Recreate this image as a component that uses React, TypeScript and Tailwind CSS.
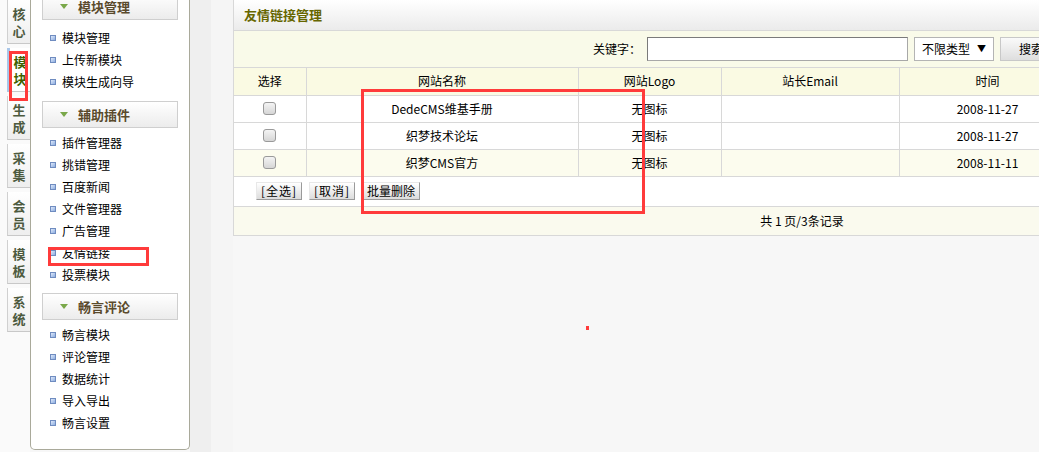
import React from 'react';

const FONT = { fontFamily: '"Noto Sans CJK SC", "Noto Sans", sans-serif' };

const TABS = [
  { label: ['核', '心'], active: false },
  { label: ['模', '块'], active: true },
  { label: ['生', '成'], active: false },
  { label: ['采', '集'], active: false },
  { label: ['会', '员'], active: false },
  { label: ['模', '板'], active: false },
  { label: ['系', '统'], active: false },
];

const MENU = [
  { title: '模块管理', items: ['模块管理', '上传新模块', '模块生成向导'] },
  { title: '辅助插件', items: ['插件管理器', '挑错管理', '百度新闻', '文件管理器', '广告管理', '友情链接', '投票模块'] },
  { title: '畅言评论', items: ['畅言模块', '评论管理', '数据统计', '导入导出', '畅言设置'] },
];

const ROWS = [
  { name: 'DedeCMS维基手册', logo: '无图标', email: '', time: '2008-11-27', bg: 'bg-white' },
  { name: '织梦技术论坛', logo: '无图标', email: '', time: '2008-11-27', bg: 'bg-white' },
  { name: '织梦CMS官方', logo: '无图标', email: '', time: '2008-11-11', bg: 'bg-[#fcfcee]' },
];

function Bullet() {
  return <span className="w-[6px] h-[6px] border border-[#6f8cc0] bg-gradient-to-br from-[#dfe9fa] to-[#8eaee0] shrink-0" />;
}

function SectionHeader({ title, first }: { title: string; first?: boolean }) {
  return (
    <div
      className={`h-[27px] mx-[11px] border border-[#cfcfcf] bg-gradient-to-b from-white to-[#ececec] flex items-center ${first ? '-mt-[7px]' : ''}`}
    >
      <svg width="8" height="5" viewBox="0 0 8 5" className="ml-[17px]">
        <path d="M0 0 L8 0 L4 5 Z" fill="#7aa84a" />
      </svg>
      <span className="ml-[10px] text-[13px] font-bold text-[#5a4a2c]">{title}</span>
    </div>
  );
}

function Btn({ children, className = '' }: { children: React.ReactNode; className?: string }) {
  return (
    <div
      className={`h-[18px] flex items-center justify-center text-[12px] text-black border-r border-b border-[#9a9a9a] border-l border-t border-l-[#e8e8e8] border-t-[#e8e8e8] bg-gradient-to-b from-white to-[#dcdcdc] ${className}`}
    >
      {children}
    </div>
  );
}

function CheckBox() {
  return <div className="w-[13px] h-[13px] mx-auto rounded-[3px] border border-[#9a9a9a] bg-gradient-to-b from-[#f4f4f4] to-[#d6d6d6]" />;
}

export default function App() {
  return (
    <div className="relative w-[1039px] h-[452px] overflow-hidden flex bg-[#f7f7f7]" style={FONT}>
      {/* vertical tabs */}
      <div className="w-[30px] shrink-0 bg-[#fafafa] flex flex-col gap-[4px] pl-[7px]">
        {TABS.map((t, i) => (
          <div
            key={i}
            className={`h-[44px] w-[23px] flex flex-col items-center justify-center text-[13px] font-bold leading-[17px] border-b border-[#c8c8c8] ${
              t.active
                ? 'bg-white text-[#3f5f00] border-l-[3px] border-l-[#a9c6e8]'
                : 'bg-gradient-to-b from-white to-[#eeeeee] text-[#4d5a3f] border-l border-l-[#d0d0d0]'
            }`}
          >
            <span>{t.label[0]}</span>
            <span>{t.label[1]}</span>
          </div>
        ))}
      </div>

      {/* sidebar */}
      <div className="w-[160px] h-[450px] shrink-0 bg-white border-l border-r border-b border-[#a9a99a] rounded-b-[5px]">
        {MENU.map((sec, si) => (
          <div key={sec.title}>
            <SectionHeader title={sec.title} first={si === 0} />
            <ul className={si === 0 ? 'pt-[7px] pb-[8px]' : 'pt-[4px] pb-[7px]'}>
              {sec.items.map(it => (
                <li key={it} className="h-[22px] flex items-center pl-[19px] gap-[6px] text-[12px] text-black">
                  <Bullet />
                  <span>{it}</span>
                </li>
              ))}
            </ul>
          </div>
        ))}
      </div>

      <div className="w-[21px] shrink-0 bg-[#efefef]" />
      <div className="w-[22px] shrink-0 bg-[#f5f5f5]" />

      {/* main panel */}
      <div className="w-[1137px] shrink-0 self-start border-l border-b border-[#d8d8d8] bg-white">
        <div className="h-[31px] border-b border-[#d8d8d8] bg-gradient-to-b from-white to-[#ebebeb] flex items-center pl-[10px]">
          <span className="text-[13px] font-bold text-[#666600]">友情链接管理</span>
        </div>

        <div className="h-[37px] border-b border-[#d8d8d8] bg-[#f9fae9] flex items-center pl-[359px] text-[12px] text-black">
          <span>关键字：</span>
          <div className="ml-[6px] w-[261px] h-[24px] bg-white border border-[#a8a8a8] border-t-[#7a7a7a] border-l-[#7a7a7a]" />
          <div className="ml-[6px] w-[80px] h-[24px] bg-white border border-[#b4b4b4] flex items-center justify-between px-[7px]">
            <span>不限类型</span>
            <span className="text-[9px]">▼</span>
          </div>
          <div className="ml-[6px] w-[60px] h-[24px] border border-[#c8c8c8] bg-gradient-to-b from-[#fafafa] to-[#dedede] flex items-center pl-[18px]">
            搜索
          </div>
        </div>

        <table className="border-collapse text-[12px] text-black table-fixed w-[1137px]">
          <colgroup>
            <col className="w-[72px]" />
            <col className="w-[272px]" />
            <col className="w-[143px]" />
            <col className="w-[178px]" />
            <col className="w-[177px]" />
            <col />
          </colgroup>
          <thead>
            <tr className="h-[27px] bg-[#fafae3]">
              {['选择', '网站名称', '网站Logo', '站长Email', '时间', ''].map((h, i) => (
                <th key={i} className="font-normal border-r border-b border-[#d8d8d8] text-center">
                  {h}
                </th>
              ))}
            </tr>
          </thead>
          <tbody>
            {ROWS.map(r => (
              <tr key={r.name} className={`h-[27px] ${r.bg}`}>
                <td className="border-r border-b border-[#d8d8d8]">
                  <CheckBox />
                </td>
                <td className="border-r border-b border-[#d8d8d8] text-center">{r.name}</td>
                <td className="border-r border-b border-[#d8d8d8] text-center">{r.logo}</td>
                <td className="border-r border-b border-[#d8d8d8] text-center">{r.email}</td>
                <td className="border-r border-b border-[#d8d8d8] text-center">{r.time}</td>
                <td className="border-b border-[#d8d8d8]" />
              </tr>
            ))}
          </tbody>
        </table>

        <div className="h-[30px] border-b border-[#d8d8d8] flex items-center pl-[22px] gap-[7px]">
          <Btn className="w-[46px] tracking-[1px]">[全选]</Btn>
          <Btn className="w-[46px] tracking-[1px]">[取消]</Btn>
          <Btn className="w-[58px]">批量删除</Btn>
        </div>

        <div className="h-[28px] bg-[#fafaee] flex items-center justify-center text-[12px] text-black whitespace-pre">
          共 1 页/3条记录
        </div>
      </div>

      {/* red annotation marks */}
      <div className="absolute left-[9px] top-[51px] w-[19px] h-[50px] border-[3px] border-[#ff3b3b]" />
      <div className="absolute left-[48px] top-[247px] w-[101px] h-[19px] border-[3px] border-[#ff3b3b]" />
      <div className="absolute left-[361px] top-[89px] w-[284px] h-[125px] border-[3px] border-[#ff3b3b]" />
      <div className="absolute left-[586px] top-[326px] w-[3px] h-[4px] bg-[#ff3b3b]" />
    </div>
  );
}
